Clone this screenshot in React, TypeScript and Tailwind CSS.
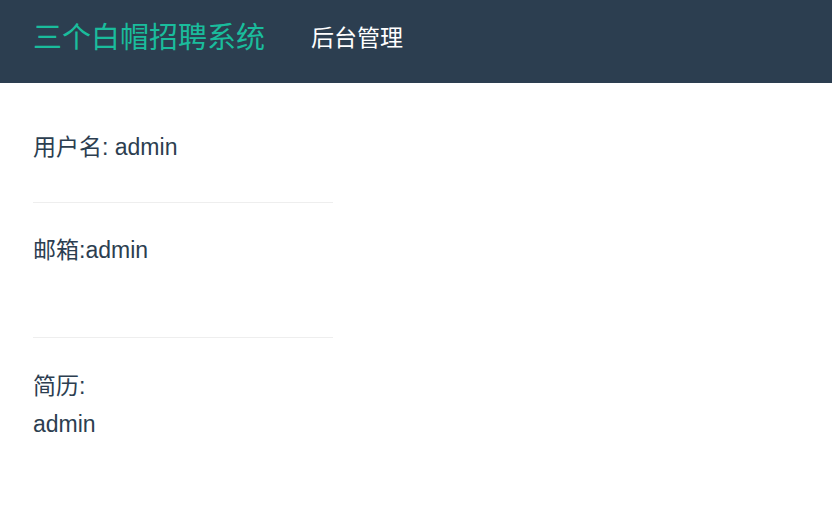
const font = { fontFamily: '"Liberation Sans", "Noto Sans CJK SC", sans-serif' };

export default function App() {
  return (
    <div className="min-h-screen bg-white" style={font}>
      <header className="flex h-[83px] items-center bg-[#2c3e50] px-[33px] pb-[6px]">
        <span className="text-[29px] leading-none text-[#1abc9c]">三个白帽招聘系统</span>
        <span className="ml-[46px] text-[23px] leading-none text-white">后台管理</span>
      </header>
      <main className="w-[300px] ml-[33px] text-[23px] leading-[30px] text-[#2c3e50]">
        <p className="mt-[49px]">用户名: admin</p>
        <hr className="mt-[40px] border-t border-[#eeeeee]" />
        <p className="mt-[32px]">邮箱:admin</p>
        <hr className="mt-[72px] border-t border-[#eeeeee]" />
        <p className="mt-[33px]">简历:</p>
        <p className="mt-[8px]">admin</p>
      </main>
    </div>
  );
}
